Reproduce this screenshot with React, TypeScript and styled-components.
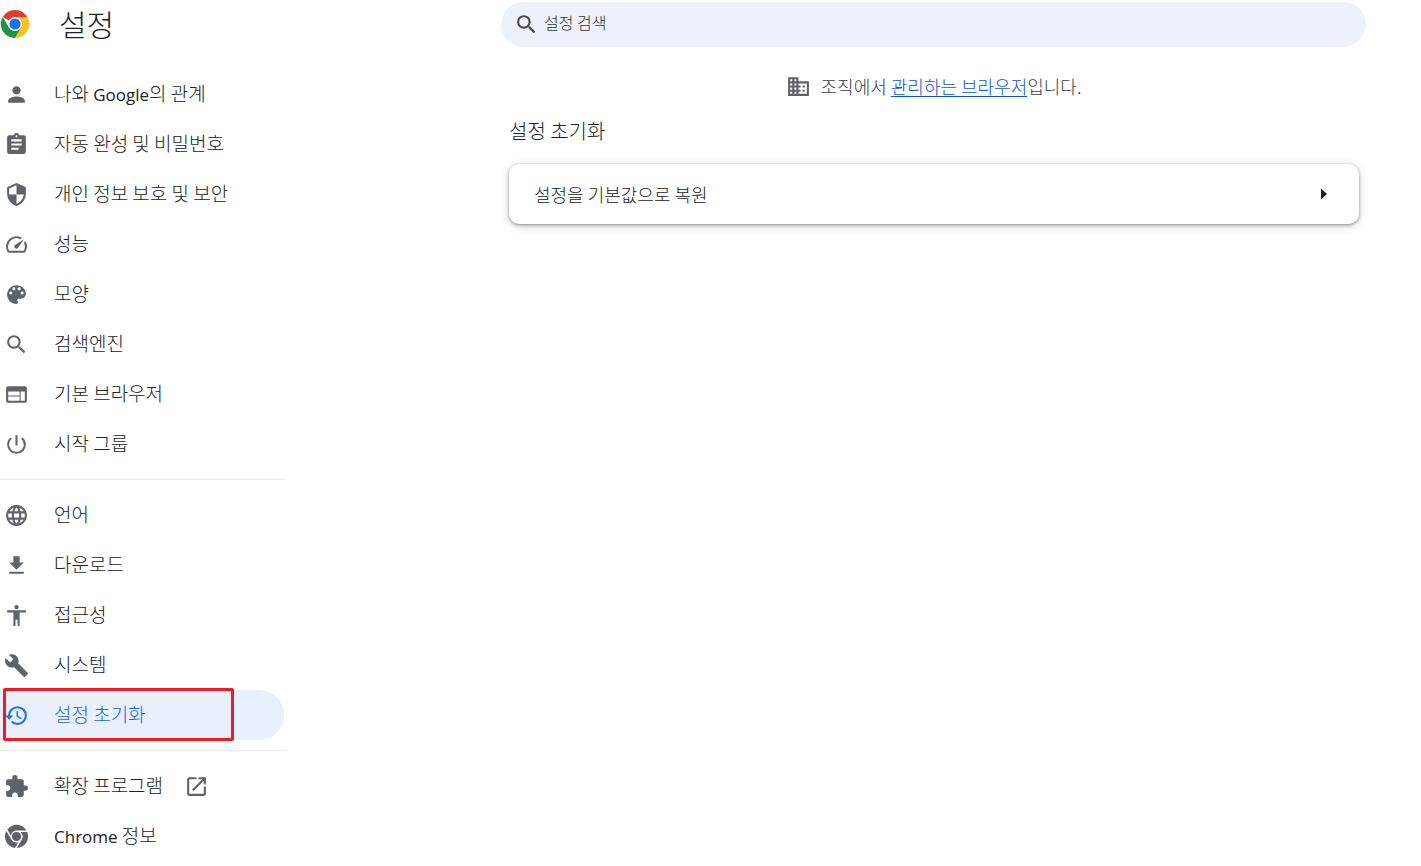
import React from "react";
import styled, { createGlobalStyle } from "styled-components";
import type { IconType } from "react-icons";
import {
  MdAccessibility,
  MdAssignment,
  MdBuild,
  MdDomain,
  MdExtension,
  MdHistory,
  MdLanguage,
  MdOpenInNew,
  MdPerson,
  MdPowerSettingsNew,
  MdSearch,
  MdSecurity,
  MdSpeed,
  MdWeb,
} from "react-icons/md";

const GlobalStyle = createGlobalStyle`
  * { box-sizing: border-box; }
  body {
    margin: 0;
    background: #fff;
    color: #202124;
    font-family: "Noto Sans CJK KR", sans-serif;
    font-weight: 300;
  }
`;

const Page = styled.div`
  display: grid;
  grid-template-columns: 287px minmax(0, 1fr);
  min-height: 100vh;
`;

const Sidebar = styled.aside`
  display: flex;
  flex-direction: column;
`;

const Brand = styled.header`
  display: flex;
  align-items: center;
  gap: 29px;
  height: 48px;
  margin-bottom: 21px;
`;

const Title = styled.h1`
  margin: 0 0 2px;
  font-size: 30px;
  line-height: 46px;
  font-weight: 300;
`;

const NavGroup = styled.ul`
  list-style: none;
  margin: 0;
  padding: 0;

  & + & {
    margin-top: 10px;
    padding-top: 10px;
    border-top: 1px solid #e8eaed;
  }
`;

const NavLink = styled.a<{ $active?: boolean }>`
  position: relative;
  display: flex;
  align-items: center;
  height: 50px;
  margin-right: 3px;
  padding-left: 4px;
  border-radius: 0 25px 25px 0;
  font-size: 19px;
  line-height: 28px;
  text-decoration: none;
  color: ${(p) => (p.$active ? "#1967d2" : "#202124")};
  background: ${(p) => (p.$active ? "#e8f0fe" : "transparent")};

  svg {
    flex: none;
    width: 25px;
    height: 25px;
    color: ${(p) => (p.$active ? "#1a73e8" : "#5f6368")};
  }
`;

const NavLabel = styled.span`
  margin: 0 21px 2px 25px;
`;

const Latin = styled.span`
  font-family: "Open Sans", sans-serif;
  font-size: 17px;
  line-height: 20px;
  font-weight: 500;
`;

const Highlight = styled.span`
  position: absolute;
  inset: -2px 50px -1px 3px;
  border: 3px solid #ed1c24;
  border-radius: 2px;
`;

const Main = styled.main`
  display: flex;
  flex-direction: column;
  padding: 2px 55px 0 214px;
`;

const SearchBox = styled.label`
  display: flex;
  align-items: center;
  gap: 5px;
  height: 45px;
  padding: 0 13px;
  border-radius: 23px;
  background: #ecf1fa;
  color: #474747;

  svg {
    flex: none;
    width: 25px;
    height: 25px;
  }
`;

const SearchInput = styled.input`
  flex: 1;
  min-width: 0;
  margin-bottom: 6px;
  padding: 0;
  border: 0;
  outline: 0;
  background: transparent;
  font: inherit;
  font-size: 16px;
  line-height: 24px;
  color: #303030;

  &::placeholder {
    color: #303030;
    opacity: 1;
  }
`;

const Managed = styled.p`
  display: flex;
  align-items: center;
  justify-content: center;
  gap: 10px;
  margin: 26px 0 0;
  font-size: 18px;
  line-height: 26px;
  color: #3c4043;

  svg {
    width: 25px;
    height: 25px;
    color: #5f6368;
  }

  a {
    color: #0b57d0;
    text-underline-offset: 2px;
  }
`;

const SectionTitle = styled.h2`
  margin: 18px 0 19px 8px;
  font-size: 20px;
  line-height: 28px;
  font-weight: 300;
`;

const Card = styled.section`
  margin: 0 7px 0 8px;
  border-radius: 10px;
  background: #fff;
  box-shadow: 0 1px 3px rgba(60, 64, 67, 0.5), 0 2px 8px rgba(60, 64, 67, 0.24);
`;

const CardRow = styled.button`
  display: flex;
  align-items: center;
  justify-content: space-between;
  width: 100%;
  height: 60px;
  padding: 0 32px 0 25px;
  border: 0;
  background: transparent;
  font: inherit;
  font-size: 18px;
  line-height: 26px;
  color: #202124;
  text-align: left;
`;

const ChromeLogo = () => (
  <svg width="30" height="30" viewBox="0 0 48 48" aria-hidden="true">
    <path fill="#e33b2e" d="M24 24 4.5 12.7A22.5 22.5 0 0 1 43.5 12.7H24z" />
    <path fill="#fbc116" d="M24 12.7h19.5A22.5 22.5 0 0 1 24 46.5L33.8 29.6z" />
    <path fill="#229342" d="M4.5 12.7A22.5 22.5 0 0 0 24 46.5l9.8-16.9L24 35.2 14.2 29.6z" />
    <circle cx="24" cy="24" r="11.3" fill="#fff" />
    <circle cx="24" cy="24" r="8.9" fill="#1a73e8" />
  </svg>
);

const ChromeMono = () => (
  <svg viewBox="0 0 24 24" aria-hidden="true" fill="currentColor">
    <circle cx="12" cy="12" r="4.4" />
    <path d="M12 6.2h9.6A11.1 11.1 0 0 0 3.2 5.2l3.6 6.2A5.8 5.8 0 0 1 12 6.2z" />
    <path d="M22.3 7.7h-6.4a5.8 5.8 0 0 1 1.1 7.3L12.3 23.1A11.1 11.1 0 0 0 22.3 7.7z" />
    <path d="M2.3 6.6a11.1 11.1 0 0 0 8.2 16.4l3.2-5.5a5.8 5.8 0 0 1-6.7-2.6z" />
  </svg>
);

const PaletteGlyph = () => (
  <svg viewBox="0 0 24 24" aria-hidden="true" fill="currentColor">
    <path d="M12 3c-4.97 0-9 4.03-9 9s4.03 9 9 9c.83 0 1.5-.67 1.5-1.5 0-.39-.15-.74-.39-1.01-.23-.26-.38-.61-.38-.99 0-.83.67-1.5 1.5-1.5H16c2.76 0 5-2.24 5-5 0-4.42-4.03-8-9-8zm-5.5 9c-.83 0-1.5-.67-1.5-1.5S5.67 9 6.5 9 8 9.67 8 10.5 7.33 12 6.5 12zm3-4C8.67 8 8 7.33 8 6.5S8.67 5 9.5 5s1.5.67 1.5 1.5S10.33 8 9.5 8zm5 0c-.83 0-1.5-.67-1.5-1.5S13.67 5 14.5 5s1.5.67 1.5 1.5S15.33 8 14.5 8zm3 4c-.83 0-1.5-.67-1.5-1.5S16.67 9 17.5 9s1.5.67 1.5 1.5-.67 1.5-1.5 1.5z" />
  </svg>
);

const DownloadGlyph = () => (
  <svg viewBox="0 0 24 24" aria-hidden="true" fill="currentColor">
    <path d="M19 9h-4V3H9v6H5l7 7 7-7zM5 18v2h14v-2H5z" />
  </svg>
);

type Item = {
  icon: IconType | React.FC;
  label: React.ReactNode;
  active?: boolean;
  external?: boolean;
};

const groups: Item[][] = [
  [
    { icon: MdPerson, label: <>나와 <Latin>Google</Latin>의 관계</> },
    { icon: MdAssignment, label: "자동 완성 및 비밀번호" },
    { icon: MdSecurity, label: "개인 정보 보호 및 보안" },
    { icon: MdSpeed, label: "성능" },
    { icon: PaletteGlyph, label: "모양" },
    { icon: MdSearch, label: "검색엔진" },
    { icon: MdWeb, label: "기본 브라우저" },
    { icon: MdPowerSettingsNew, label: "시작 그룹" },
  ],
  [
    { icon: MdLanguage, label: "언어" },
    { icon: DownloadGlyph, label: "다운로드" },
    { icon: MdAccessibility, label: "접근성" },
    { icon: MdBuild, label: "시스템" },
    { icon: MdHistory, label: "설정 초기화", active: true },
  ],
  [
    { icon: MdExtension, label: "확장 프로그램", external: true },
    { icon: ChromeMono, label: <><Latin>Chrome</Latin> 정보</> },
  ],
];

export default function App() {
  return (
    <>
      <GlobalStyle />
      <Page>
        <Sidebar>
          <Brand>
            <ChromeLogo />
            <Title>설정</Title>
          </Brand>
          <nav>
            {groups.map((items, g) => (
              <NavGroup key={g}>
                {items.map(({ icon: Icon, label, active, external }, i) => (
                  <li key={i}>
                    <NavLink href="#" $active={active} aria-current={active ? "page" : undefined}>
                      <Icon />
                      <NavLabel>{label}</NavLabel>
                      {external && <MdOpenInNew />}
                      {active && <Highlight />}
                    </NavLink>
                  </li>
                ))}
              </NavGroup>
            ))}
          </nav>
        </Sidebar>
        <Main>
          <SearchBox>
            <MdSearch />
            <SearchInput type="search" placeholder="설정 검색" aria-label="설정 검색" />
          </SearchBox>
          <Managed>
            <MdDomain />
            <span>
              조직에서 <a href="#">관리하는 브라우저</a>입니다.
            </span>
          </Managed>
          <SectionTitle>설정 초기화</SectionTitle>
          <Card>
            <CardRow type="button">
              설정을 기본값으로 복원
              <svg width="6" height="12" viewBox="0 0 6 12" aria-hidden="true">
                <path d="M0 0.5 6 6 0 11.5z" fill="#202124" />
              </svg>
            </CardRow>
          </Card>
        </Main>
      </Page>
    </>
  );
}
